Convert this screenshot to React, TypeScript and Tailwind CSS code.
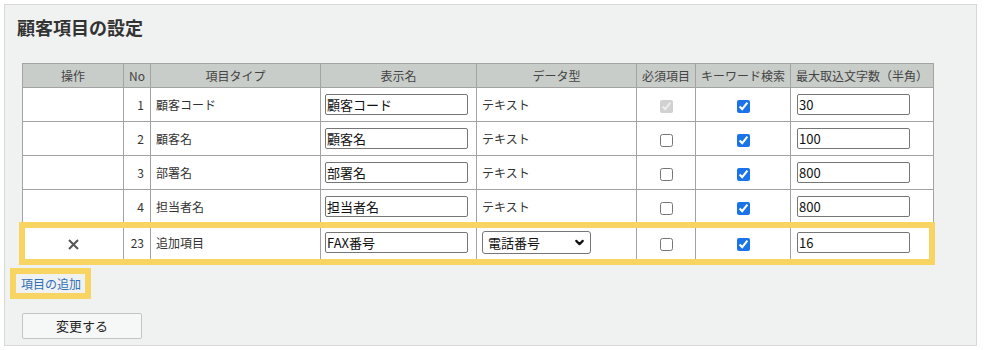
import { ChevronDown } from 'lucide-react'

interface Row {
  no: number
  type: string
  label: string
  dataType: string
  required: boolean
  requiredDisabled?: boolean
  keyword: boolean
  max: string
  added?: boolean
}

const rows: Row[] = [
  { no: 1, type: '顧客コード', label: '顧客コード', dataType: 'テキスト', required: true, requiredDisabled: true, keyword: true, max: '30' },
  { no: 2, type: '顧客名', label: '顧客名', dataType: 'テキスト', required: false, keyword: true, max: '100' },
  { no: 3, type: '部署名', label: '部署名', dataType: 'テキスト', required: false, keyword: true, max: '800' },
  { no: 4, type: '担当者名', label: '担当者名', dataType: 'テキスト', required: false, keyword: true, max: '800' },
  { no: 23, type: '追加項目', label: 'FAX番号', dataType: '電話番号', required: false, keyword: true, max: '16', added: true },
]

const th = 'border border-[#a3a3a3] font-normal text-[12px] text-[#444] text-center p-0'
const td = 'border border-[#a3a3a3] text-[12px] text-[#333] p-0'
const input =
  'h-[21px] border border-[#767676] rounded-[2px] bg-white text-[13px] text-[#111] px-[1px] outline-none'

export default function App() {
  return (
    <div
      className="w-[984px] h-[350px] bg-white pt-[4px] pl-[4px]"
      style={{ fontFamily: '"Noto Sans CJK JP", "Noto Sans", sans-serif' }}
    >
      <div className="w-[973px] h-[342px] border border-[#d8d8d8] bg-[#f0f2f1]">
        <div className="h-[44px] flex items-center pl-[12px]">
          <h1 className="text-[18px] font-bold text-[#333]">顧客項目の設定</h1>
        </div>

        <div className="relative mt-[14px] ml-[17px] w-[911px]">
          <table className="border-collapse table-fixed w-[911px] bg-white">
            <colgroup>
              <col className="w-[101px]" />
              <col className="w-[27px]" />
              <col className="w-[170px]" />
              <col className="w-[156px]" />
              <col className="w-[160px]" />
              <col className="w-[59px]" />
              <col className="w-[95px]" />
              <col className="w-[143px]" />
            </colgroup>
            <thead>
              <tr className="h-[24px] bg-[#c9cdc9]">
                <th className={th}>操作</th>
                <th className={th}>No</th>
                <th className={th}>項目タイプ</th>
                <th className={th}>表示名</th>
                <th className={th}>データ型</th>
                <th className={th}>必須項目</th>
                <th className={th}>キーワード検索</th>
                <th className={th}>最大取込文字数（半角）</th>
              </tr>
            </thead>
            <tbody>
              {rows.map((r) => (
                <tr key={r.no} className={r.added ? 'h-[38px]' : 'h-[34px]'}>
                  <td className={`${td} text-center`}>
                    {r.added && (
                      <svg width="11" height="11" viewBox="0 0 11 11" className="inline-block">
                        <path d="M1 1 L10 10 M10 1 L1 10" stroke="#555" strokeWidth="2" />
                      </svg>
                    )}
                  </td>
                  <td className={`${td} text-right pr-[6px]`}>{r.no}</td>
                  <td className={`${td} pl-[5px]`}>{r.type}</td>
                  <td className={`${td} pl-[4px]`}>
                    <input className={`${input} w-[143px] block`} defaultValue={r.label} />
                  </td>
                  <td className={`${td} pl-[5px]`}>
                    {r.added ? (
                      <div className="relative w-[109px] h-[23px]">
                        <select
                          className="appearance-none w-[109px] h-[23px] border border-[#767676] rounded-[3px] bg-white text-[13px] text-[#111] pl-[5px] outline-none"
                          defaultValue={r.dataType}
                        >
                          <option>{r.dataType}</option>
                        </select>
                        <ChevronDown
                          size={13}
                          strokeWidth={4}
                          className="absolute right-[5px] top-[5px] text-[#111] pointer-events-none"
                        />
                      </div>
                    ) : (
                      r.dataType
                    )}
                  </td>
                  <td className={`${td} text-center`}>
                    <input
                      type="checkbox"
                      className="m-0 align-middle w-[13px] h-[13px] accent-[#1a73e8]"
                      defaultChecked={r.required}
                      disabled={r.requiredDisabled}
                    />
                  </td>
                  <td className={`${td} text-center`}>
                    <input
                      type="checkbox"
                      className="m-0 align-middle w-[13px] h-[13px] accent-[#1a73e8]"
                      defaultChecked={r.keyword}
                    />
                  </td>
                  <td className={`${td} pl-[6px]`}>
                    <input className={`${input} w-[113px] block`} defaultValue={r.max} />
                  </td>
                </tr>
              ))}
            </tbody>
          </table>
          <div className="absolute left-[-3px] top-[159px] w-[916px] h-[43px] border-[6px] border-[#f8d563] pointer-events-none" />
        </div>

        <div className="mt-[6px] ml-[5px] w-[81px] h-[31px] border-[6px] border-[#f8d563] flex items-center pl-[5px]">
          <a className="text-[12px] text-[#2f6fb8] cursor-pointer">項目の追加</a>
        </div>

        <button className="mt-[14px] ml-[17px] w-[120px] h-[26px] border border-[#c4c4c4] rounded-[2px] bg-[#f6f7f7] text-[13px] text-[#222]">
          変更する
        </button>
      </div>
    </div>
  )
}
